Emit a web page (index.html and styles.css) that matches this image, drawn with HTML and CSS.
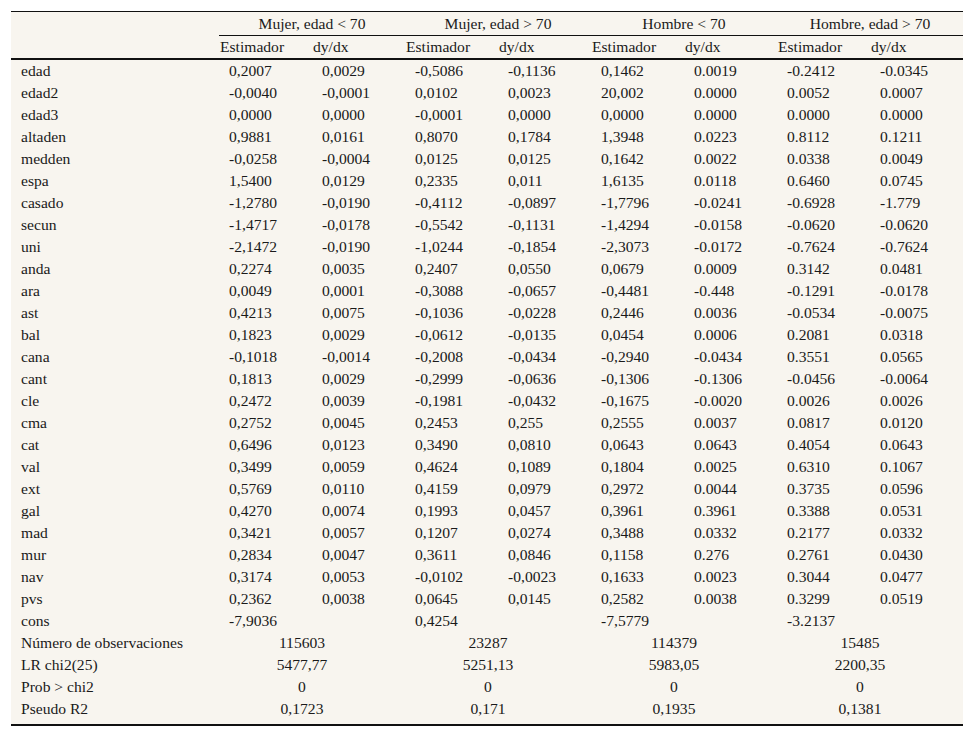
FILE: index.html
```html
<!DOCTYPE html>
<html lang="es">
<head>
<meta charset="utf-8">
<title>Tabla</title>
<link rel="stylesheet" href="styles.css">
</head>
<body>
<div class="frame">
<table class="res">
<colgroup>
<col class="c-label"><col class="c-val"><col class="c-val"><col class="c-val"><col class="c-val"><col class="c-val"><col class="c-val"><col class="c-val"><col class="c-val">
</colgroup>
<thead>
<tr class="h1">
<th class="blank"></th>
<th colspan="2" class="grp">Mujer, edad &lt; 70</th>
<th colspan="2" class="grp">Mujer, edad &gt; 70</th>
<th colspan="2" class="grp">Hombre &lt; 70</th>
<th colspan="2" class="grp">Hombre, edad &gt; 70</th>
</tr>
<tr class="h2">
<th></th>
<th>Estimador</th><th>dy/dx</th>
<th>Estimador</th><th>dy/dx</th>
<th>Estimador</th><th>dy/dx</th>
<th>Estimador</th><th>dy/dx</th>
</tr>
</thead>
<tbody>
<tr><td>edad</td><td>0,2007</td><td>0,0029</td><td>-0,5086</td><td>-0,1136</td><td>0,1462</td><td>0.0019</td><td>-0.2412</td><td>-0.0345</td></tr>
<tr><td>edad2</td><td>-0,0040</td><td>-0,0001</td><td>0,0102</td><td>0,0023</td><td>20,002</td><td>0.0000</td><td>0.0052</td><td>0.0007</td></tr>
<tr><td>edad3</td><td>0,0000</td><td>0,0000</td><td>-0,0001</td><td>0,0000</td><td>0,0000</td><td>0.0000</td><td>0.0000</td><td>0.0000</td></tr>
<tr><td>altaden</td><td>0,9881</td><td>0,0161</td><td>0,8070</td><td>0,1784</td><td>1,3948</td><td>0.0223</td><td>0.8112</td><td>0.1211</td></tr>
<tr><td>medden</td><td>-0,0258</td><td>-0,0004</td><td>0,0125</td><td>0,0125</td><td>0,1642</td><td>0.0022</td><td>0.0338</td><td>0.0049</td></tr>
<tr><td>espa</td><td>1,5400</td><td>0,0129</td><td>0,2335</td><td>0,011</td><td>1,6135</td><td>0.0118</td><td>0.6460</td><td>0.0745</td></tr>
<tr><td>casado</td><td>-1,2780</td><td>-0,0190</td><td>-0,4112</td><td>-0,0897</td><td>-1,7796</td><td>-0.0241</td><td>-0.6928</td><td>-1.779</td></tr>
<tr><td>secun</td><td>-1,4717</td><td>-0,0178</td><td>-0,5542</td><td>-0,1131</td><td>-1,4294</td><td>-0.0158</td><td>-0.0620</td><td>-0.0620</td></tr>
<tr><td>uni</td><td>-2,1472</td><td>-0,0190</td><td>-1,0244</td><td>-0,1854</td><td>-2,3073</td><td>-0.0172</td><td>-0.7624</td><td>-0.7624</td></tr>
<tr><td>anda</td><td>0,2274</td><td>0,0035</td><td>0,2407</td><td>0,0550</td><td>0,0679</td><td>0.0009</td><td>0.3142</td><td>0.0481</td></tr>
<tr><td>ara</td><td>0,0049</td><td>0,0001</td><td>-0,3088</td><td>-0,0657</td><td>-0,4481</td><td>-0.448</td><td>-0.1291</td><td>-0.0178</td></tr>
<tr><td>ast</td><td>0,4213</td><td>0,0075</td><td>-0,1036</td><td>-0,0228</td><td>0,2446</td><td>0.0036</td><td>-0.0534</td><td>-0.0075</td></tr>
<tr><td>bal</td><td>0,1823</td><td>0,0029</td><td>-0,0612</td><td>-0,0135</td><td>0,0454</td><td>0.0006</td><td>0.2081</td><td>0.0318</td></tr>
<tr><td>cana</td><td>-0,1018</td><td>-0,0014</td><td>-0,2008</td><td>-0,0434</td><td>-0,2940</td><td>-0.0434</td><td>0.3551</td><td>0.0565</td></tr>
<tr><td>cant</td><td>0,1813</td><td>0,0029</td><td>-0,2999</td><td>-0,0636</td><td>-0,1306</td><td>-0.1306</td><td>-0.0456</td><td>-0.0064</td></tr>
<tr><td>cle</td><td>0,2472</td><td>0,0039</td><td>-0,1981</td><td>-0,0432</td><td>-0,1675</td><td>-0.0020</td><td>0.0026</td><td>0.0026</td></tr>
<tr><td>cma</td><td>0,2752</td><td>0,0045</td><td>0,2453</td><td>0,255</td><td>0,2555</td><td>0.0037</td><td>0.0817</td><td>0.0120</td></tr>
<tr><td>cat</td><td>0,6496</td><td>0,0123</td><td>0,3490</td><td>0,0810</td><td>0,0643</td><td>0.0643</td><td>0.4054</td><td>0.0643</td></tr>
<tr><td>val</td><td>0,3499</td><td>0,0059</td><td>0,4624</td><td>0,1089</td><td>0,1804</td><td>0.0025</td><td>0.6310</td><td>0.1067</td></tr>
<tr><td>ext</td><td>0,5769</td><td>0,0110</td><td>0,4159</td><td>0,0979</td><td>0,2972</td><td>0.0044</td><td>0.3735</td><td>0.0596</td></tr>
<tr><td>gal</td><td>0,4270</td><td>0,0074</td><td>0,1993</td><td>0,0457</td><td>0,3961</td><td>0.3961</td><td>0.3388</td><td>0.0531</td></tr>
<tr><td>mad</td><td>0,3421</td><td>0,0057</td><td>0,1207</td><td>0,0274</td><td>0,3488</td><td>0.0332</td><td>0.2177</td><td>0.0332</td></tr>
<tr><td>mur</td><td>0,2834</td><td>0,0047</td><td>0,3611</td><td>0,0846</td><td>0,1158</td><td>0.276</td><td>0.2761</td><td>0.0430</td></tr>
<tr><td>nav</td><td>0,3174</td><td>0,0053</td><td>-0,0102</td><td>-0,0023</td><td>0,1633</td><td>0.0023</td><td>0.3044</td><td>0.0477</td></tr>
<tr><td>pvs</td><td>0,2362</td><td>0,0038</td><td>0,0645</td><td>0,0145</td><td>0,2582</td><td>0.0038</td><td>0.3299</td><td>0.0519</td></tr>
<tr><td>cons</td><td>-7,9036</td><td></td><td>0,4254</td><td></td><td>-7,5779</td><td></td><td>-3.2137</td><td></td></tr>
<tr class="stat"><td>Número de observaciones</td><td colspan="2">115603</td><td colspan="2">23287</td><td colspan="2">114379</td><td colspan="2">15485</td></tr>
<tr class="stat"><td>LR chi2(25)</td><td colspan="2">5477,77</td><td colspan="2">5251,13</td><td colspan="2">5983,05</td><td colspan="2">2200,35</td></tr>
<tr class="stat"><td>Prob &gt; chi2</td><td colspan="2">0</td><td colspan="2">0</td><td colspan="2">0</td><td colspan="2">0</td></tr>
<tr class="stat"><td>Pseudo R2</td><td colspan="2">0,1723</td><td colspan="2">0,171</td><td colspan="2">0,1935</td><td colspan="2">0,1381</td></tr>
</tbody>
</table>
</div>
</body>
</html>
```

FILE: styles.css
```css
html, body {
  margin: 0;
  padding: 0;
  background: #ffffff;
}

.frame {
  margin: 11px 0 0 11px;
  width: 952px;
  background: #f8f5ef;
  border-top: 1px solid #111;
  border-bottom: 2px solid #111;
  padding-bottom: 4px;
}

.res {
  width: 952px;
  table-layout: fixed;
  border-collapse: separate;
  border-spacing: 0;
  font-family: "Liberation Serif", "Times New Roman", serif;
  font-size: 15.6px;
  color: #1a1a1a;
}

.c-label { width: 208px; }
.c-val { width: 93px; }

.res th,
.res td {
  padding: 0;
  font-weight: normal;
  text-align: left;
  white-space: nowrap;
  vertical-align: middle;
}

.h1 th {
  height: 23px;
  line-height: 23px;
}

.h1 .grp {
  text-align: center;
  border-bottom: 1px solid #111;
}

.h2 th {
  height: 22px;
  line-height: 22px;
  padding-left: 1px;
  border-bottom: 2px solid #111;
}

.res tbody td {
  height: 22px;
  line-height: 22px;
  padding-left: 10px;
}

.res tbody tr.stat td[colspan] {
  text-align: center;
  padding-left: 0;
  padding-right: 20px;
}
```
